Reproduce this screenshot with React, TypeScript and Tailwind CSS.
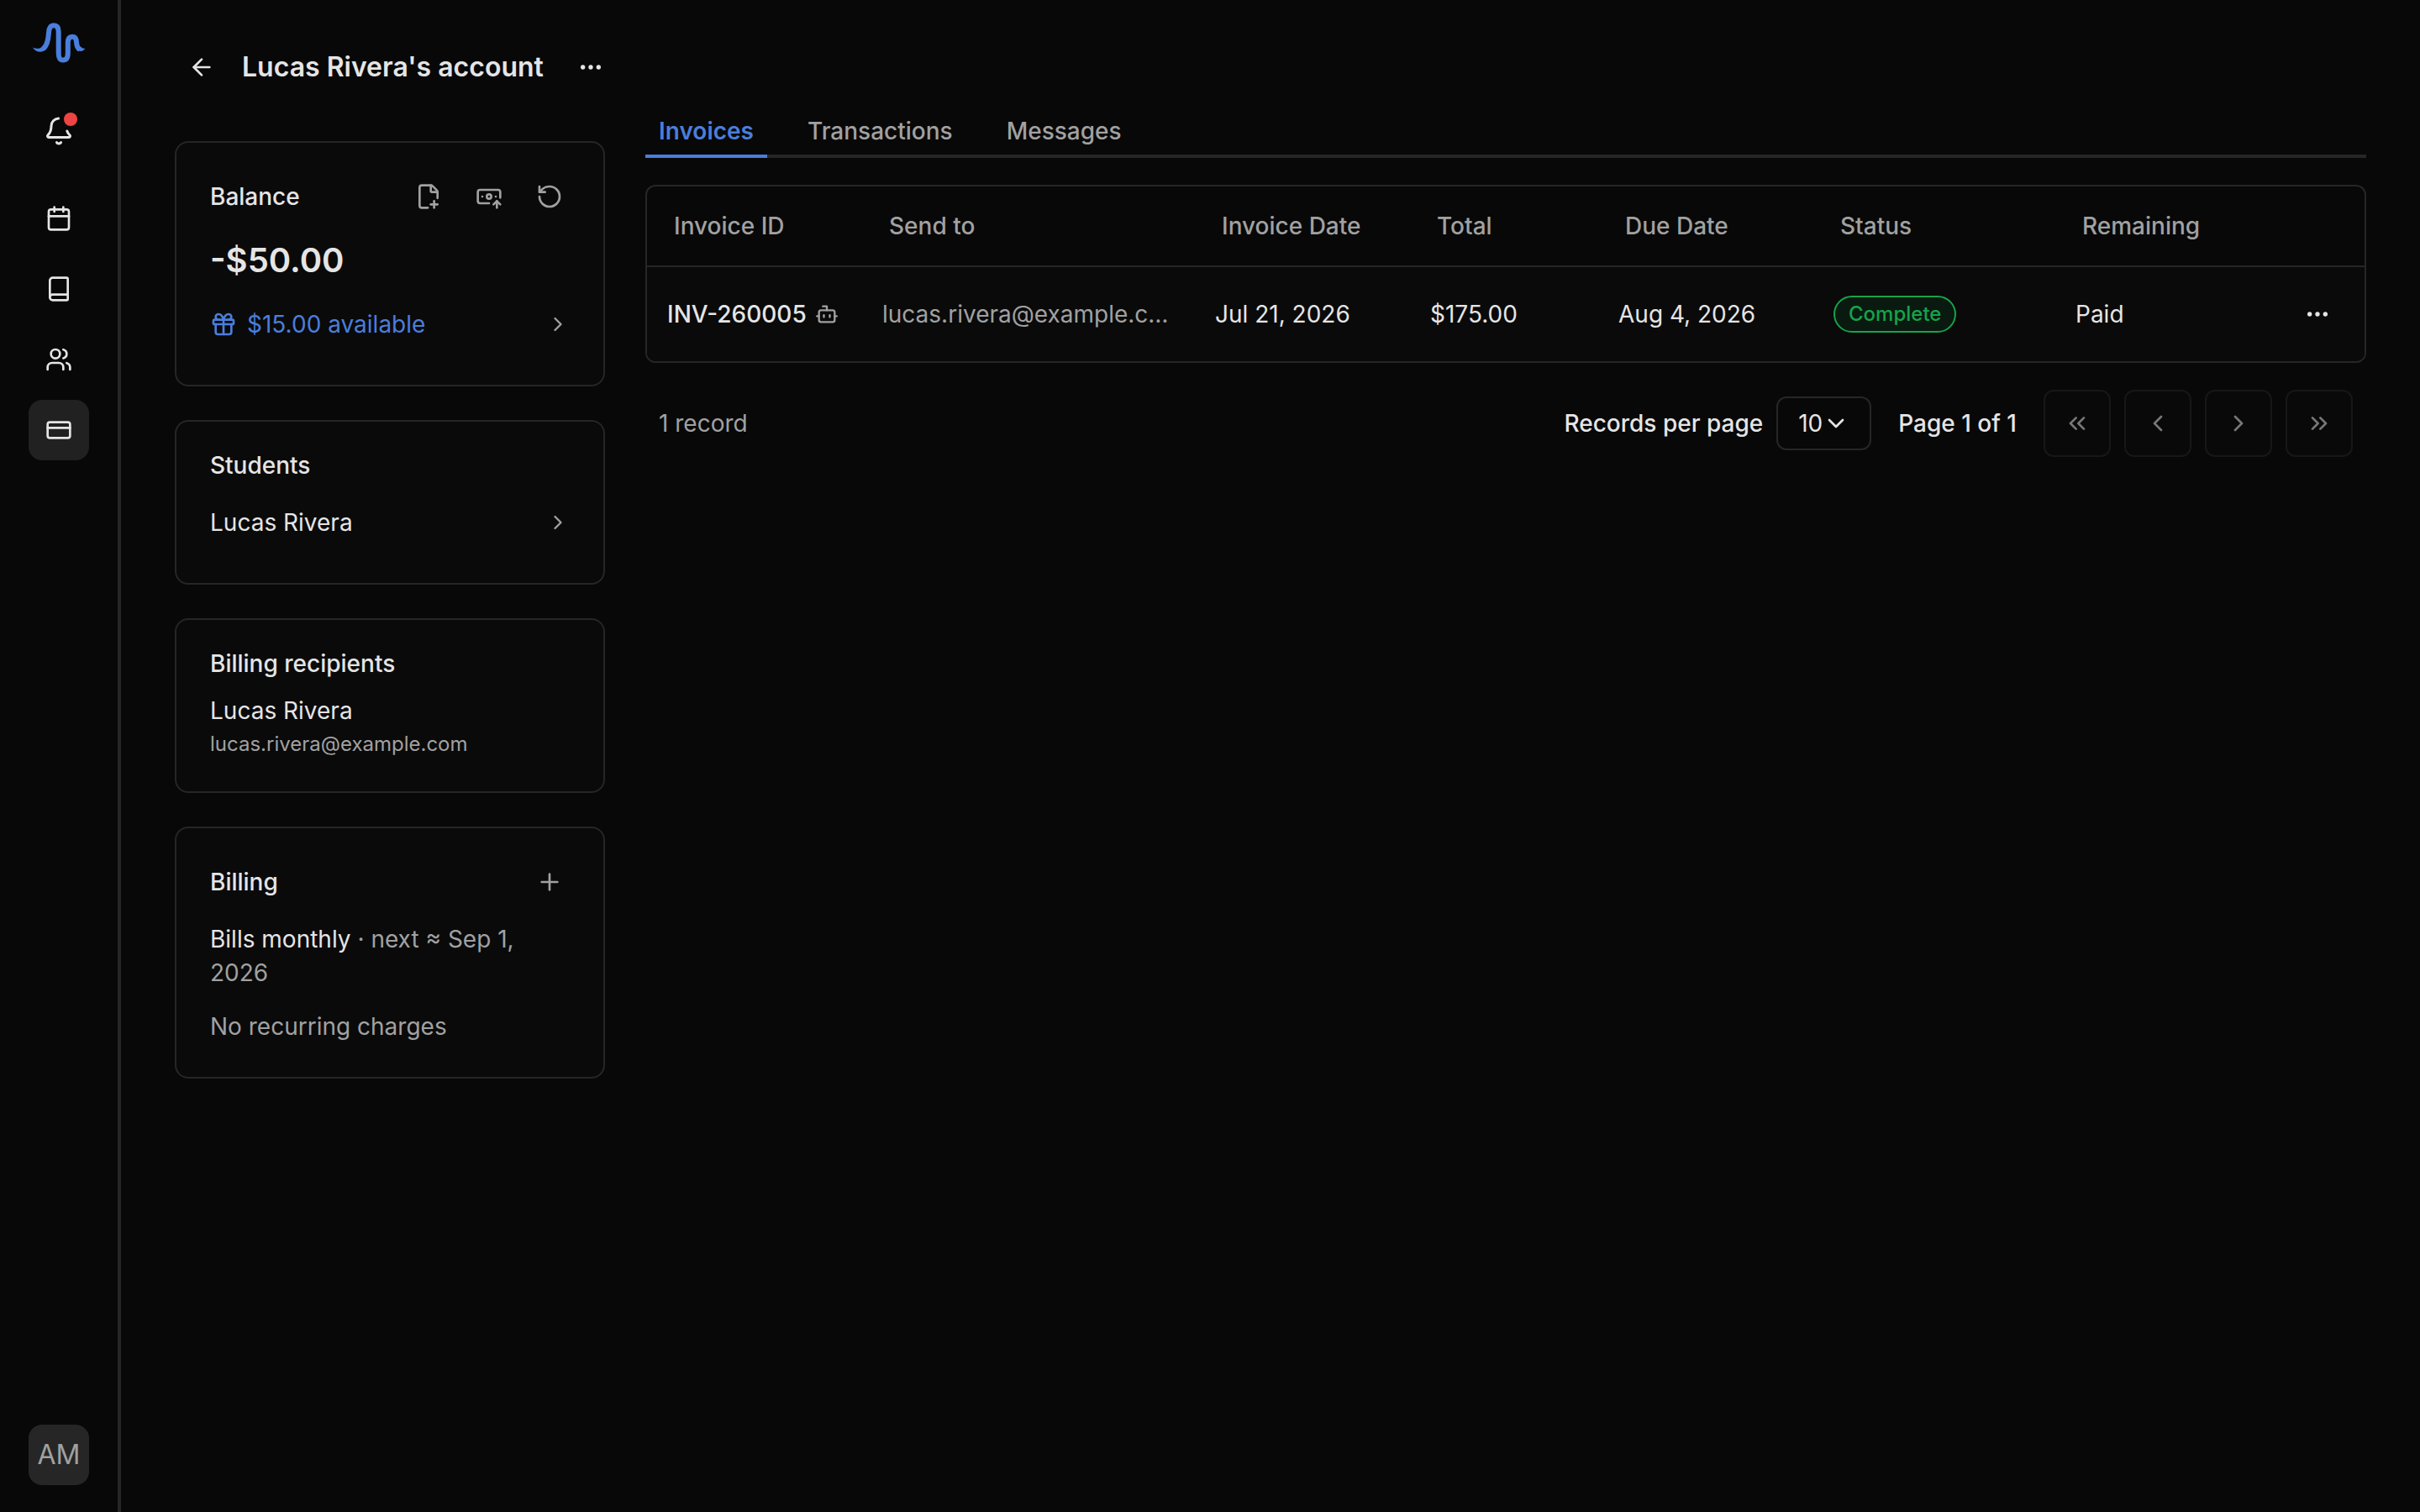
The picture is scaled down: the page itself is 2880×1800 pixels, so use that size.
import { useState } from 'react';
import {
    ArrowLeft,
    BanknoteArrowUp,
    Book,
    Bot,
    Calendar,
    ChevronDown,
    ChevronLeft,
    ChevronRight,
    ChevronsLeft,
    ChevronsRight,
    CreditCard,
    Ellipsis,
    FilePlusCorner,
    Gift,
    Plus,
    RotateCcw,
    Users,
} from 'lucide-react';

const navItems = [
    { label: 'Calendar', icon: Calendar, active: false },
    { label: 'Lessons', icon: Book, active: false },
    { label: 'People', icon: Users, active: false },
    { label: 'Billing', icon: CreditCard, active: true },
];

const tabs = ['Invoices', 'Transactions', 'Messages'];

const columns = [
    { label: 'Invoice ID', width: 'w-[256px]' },
    { label: 'Send to', width: 'w-[396px]' },
    { label: 'Invoice Date', width: 'w-[256px]' },
    { label: 'Total', width: 'w-[224px]' },
    { label: 'Due Date', width: 'w-[256px]' },
    { label: 'Status', width: 'w-[288px]' },
    { label: 'Remaining', width: 'w-auto' },
];

const invoices = [
    {
        id: 'INV-260005',
        sendTo: 'lucas.rivera@example.com',
        date: 'Jul 21, 2026',
        total: '$175.00',
        due: 'Aug 4, 2026',
        status: 'Complete',
        remaining: 'Paid',
    },
];

function Logo() {
    return (
        <svg viewBox="0 0 64 50" className="w-16 h-[50px] text-[#4a7edb]" fill="none" aria-hidden="true">
            {/* Wave body */}
            <path
                d="M13.500 31C18 27.500 19.500 20 20 12C20.300 6 22.500 3.200 26 3.200C30 3.200 31.700 6 31.700 11V36C31.700 42 33 44.500 37 44.500C41 44.500 42.800 42 42.800 36V24C42.800 19 44.500 16.700 48 16.700C51.500 16.700 52.800 19 53 23C53.200 27.500 54.500 30.500 57 32"
                stroke="currentColor"
                strokeWidth="6"
            />
            {/* Tapered ends */}
            <path d="M1 29.500C5.500 31.500 9.500 31.500 12.500 28L17 31.800C13.500 35.500 5 36.500 1 29.500Z" fill="currentColor" />
            <path d="M63.500 30.500C61.500 31 60 30.500 58 28.500L53 31C56.500 35.500 61 34.500 63.500 30.500Z" fill="currentColor" />
        </svg>
    );
}

function BellIcon() {
    return (
        <svg
            viewBox="0 0 24 24"
            className="size-9"
            fill="none"
            stroke="currentColor"
            strokeWidth="2"
            strokeLinecap="round"
            strokeLinejoin="round"
            aria-hidden="true"
        >
            <path d="M10.268 21a2 2 0 0 0 3.464 0" />
            <path d="M11.68 2.009A6 6 0 0 0 6 8c0 4.499-1.411 5.956-2.738 7.326A1 1 0 0 0 4 17h16a1 1 0 0 0 .74-1.673c-.824-.85-1.678-1.731-2.21-3.348" />
        </svg>
    );
}

function Sidebar() {
    return (
        <aside className="w-36 shrink-0 border-r-4 border-[#262626] flex flex-col items-center pt-[27px] pb-8">
            <a href="#" aria-label="Home">
                <Logo />
            </a>
            <button aria-label="Notifications" className="size-[72px] mt-[43px] rounded-2xl flex items-center justify-center">
                <span className="relative">
                    <BellIcon />
                    <span className="absolute -top-1 -right-1 size-4 rounded-full bg-[#ef4444]" />
                </span>
            </button>
            <nav className="mt-8 flex flex-col gap-3">
                {navItems.map(({ label, icon: Icon, active }) => (
                    <a
                        key={label}
                        href="#"
                        aria-label={label}
                        className={`size-[72px] rounded-2xl flex items-center justify-center ${active ? 'bg-[#212121]' : ''}`}
                    >
                        <Icon className="size-8" />
                    </a>
                ))}
            </nav>
            <button className="mt-auto size-[72px] rounded-2xl bg-[#262626] text-[#a1a1a1] text-[32px]">AM</button>
        </aside>
    );
}

function Card({ children }: { children: React.ReactNode }) {
    return <section className="rounded-2xl border-2 border-[#262626] bg-[#0a0a0a] p-10">{children}</section>;
}

function AccountPanels() {
    return (
        <div className="w-[512px] shrink-0 mt-8 flex flex-col gap-10">
            <Card>
                <div className="h-12 flex items-center justify-between">
                    <h2 className="font-medium">Balance</h2>
                    <div className="flex gap-6 text-[#a1a1a1]">
                        <button aria-label="New invoice" className="size-12 flex items-center justify-center">
                            <FilePlusCorner className="size-8" />
                        </button>
                        <button aria-label="Record payment" className="size-12 flex items-center justify-center">
                            <BanknoteArrowUp className="size-8" />
                        </button>
                        <button aria-label="Refund" className="size-12 flex items-center justify-center">
                            <RotateCcw className="size-8" />
                        </button>
                    </div>
                </div>
                <p className="mt-6 mb-4 text-[40px] leading-[56px] font-semibold">-$50.00</p>
                <button className="w-full h-16 flex items-center gap-3 text-[#4a7edb]">
                    <Gift className="size-8" />
                    $15.00 available
                    <ChevronRight className="size-7 ml-auto text-[#a1a1a1]" />
                </button>
            </Card>

            <Card>
                <h2 className="font-medium leading-6 mb-6">Students</h2>
                <a href="#" className="h-16 flex items-center justify-between">
                    Lucas Rivera
                    <ChevronRight className="size-7 text-[#a1a1a1]" />
                </a>
            </Card>

            <Card>
                <h2 className="font-medium leading-6 mb-6">Billing recipients</h2>
                <p className="mb-1">Lucas Rivera</p>
                <p className="text-2xl text-[#a1a1a1]">lucas.rivera@example.com</p>
            </Card>

            <Card>
                <div className="h-12 flex items-center justify-between">
                    <h2 className="font-medium">Billing</h2>
                    <button aria-label="Add charge" className="size-12 flex items-center justify-center text-[#a1a1a1]">
                        <Plus className="size-8" />
                    </button>
                </div>
                <p className="mt-6 text-[#a1a1a1]">
                    <span className="text-[#e5e5e5]">Bills monthly</span> · next ≈ Sep 1, 2026
                </p>
                <p className="mt-6 text-[#a1a1a1]">No recurring charges</p>
            </Card>
        </div>
    );
}

function InvoiceTable() {
    return (
        <div className="mt-8 rounded-xl border-2 border-[#262626] overflow-hidden">
            <table className="w-full table-fixed border-separate border-spacing-0 text-left">
                <thead>
                    <tr className="h-24 text-[#a1a1a1]">
                        {columns.map((col) => (
                            <th key={col.label} className={`${col.width} pl-8 pr-4 border-b-2 border-[#262626] font-medium`}>
                                {col.label}
                            </th>
                        ))}
                        <th className="w-28 border-b-2 border-[#262626]" aria-label="Actions" />
                    </tr>
                </thead>
                <tbody>
                    {invoices.map((inv) => (
                        <tr key={inv.id} className="h-28 bg-[#0a0a0a]">
                            <td className="pl-6">
                                <div className="flex items-center gap-2.5 font-medium">
                                    {inv.id}
                                    <Bot className="size-7 text-[#a1a1a1]" />
                                </div>
                            </td>
                            <td className="px-6 truncate text-[#a1a1a1]">{inv.sendTo}</td>
                            <td className="px-6">{inv.date}</td>
                            <td className="px-6">{inv.total}</td>
                            <td className="px-6">{inv.due}</td>
                            <td className="px-6">
                                <span className="flex w-fit items-center h-11 px-4 rounded-full border-2 border-[#16a34a] bg-[#0a1a10] text-[#16a34a] text-2xl font-medium">
                                    {inv.status}
                                </span>
                            </td>
                            <td className="px-6">{inv.remaining}</td>
                            <td className="px-6">
                                <button aria-label="Invoice actions" className="size-16 flex items-center justify-center">
                                    <Ellipsis className="size-8" />
                                </button>
                            </td>
                        </tr>
                    ))}
                </tbody>
            </table>
        </div>
    );
}

const pagerButtons = [
    { label: 'First page', icon: ChevronsLeft },
    { label: 'Previous page', icon: ChevronLeft },
    { label: 'Next page', icon: ChevronRight },
    { label: 'Last page', icon: ChevronsRight },
];

function Pagination() {
    const [pageSize, setPageSize] = useState('10');

    return (
        <div className="mt-8 px-4 flex items-center justify-between">
            <p className="text-[#a1a1a1]">1 record</p>
            <div className="flex items-center gap-8">
                <div className="flex items-center gap-4">
                    <label htmlFor="page-size" className="font-medium">Records per page</label>
                    <div className="relative">
                        <select
                            id="page-size"
                            value={pageSize}
                            onChange={(e) => setPageSize(e.target.value)}
                            className="block h-16 pl-6 pr-14 appearance-none field-sizing-content rounded-xl border-2 border-[#262626] bg-transparent"
                        >
                            <option>10</option>
                            <option>20</option>
                            <option>50</option>
                        </select>
                        <ChevronDown className="size-8 absolute right-[26px] top-4 pointer-events-none" />
                    </div>
                </div>
                <p className="font-medium">Page 1 of 1</p>
                <div className="flex gap-4">
                    {pagerButtons.map(({ label, icon: Icon }) => (
                        <button
                            key={label}
                            aria-label={label}
                            disabled
                            className="size-20 rounded-xl border-2 border-[#262626] bg-[#0a0a0a] flex items-center justify-center disabled:opacity-50"
                        >
                            <Icon className="size-8" />
                        </button>
                    ))}
                </div>
            </div>
        </div>
    );
}

export default function App() {
    const [activeTab, setActiveTab] = useState('Invoices');

    return (
        <div className="min-h-screen flex bg-[#080808] text-[#e5e5e5] font-['Inter',sans-serif] text-[28px] leading-10">
            <Sidebar />
            <main className="flex-1 min-w-0 px-16 pt-12">
                {/* Page header */}
                <header className="h-16 flex items-center">
                    <button aria-label="Back" className="size-16 flex items-center justify-center">
                        <ArrowLeft className="size-8" />
                    </button>
                    <h1 className="ml-4 text-[32px] font-semibold">Lucas Rivera's account</h1>
                    <button aria-label="Account actions" className="size-16 ml-6 flex items-center justify-center">
                        <Ellipsis className="size-8" />
                    </button>
                </header>

                <div className="mt-6 flex gap-12">
                    <AccountPanels />

                    <div className="flex-1 min-w-0">
                        <div role="tablist" className="flex gap-8 border-b-4 border-[#262626]">
                            {tabs.map((tab) => (
                                <button
                                    key={tab}
                                    role="tab"
                                    aria-selected={tab === activeTab}
                                    onClick={() => setActiveTab(tab)}
                                    className={`px-4 pb-2 -mb-1 border-b-4 ${
                                        tab === activeTab
                                            ? 'border-[#4a7edb] text-[#4a7edb] font-semibold'
                                            : 'border-transparent text-[#a1a1a1] font-medium'
                                    }`}
                                >
                                    {tab}
                                </button>
                            ))}
                        </div>
                        <InvoiceTable />
                        <Pagination />
                    </div>
                </div>
            </main>
        </div>
    );
}
